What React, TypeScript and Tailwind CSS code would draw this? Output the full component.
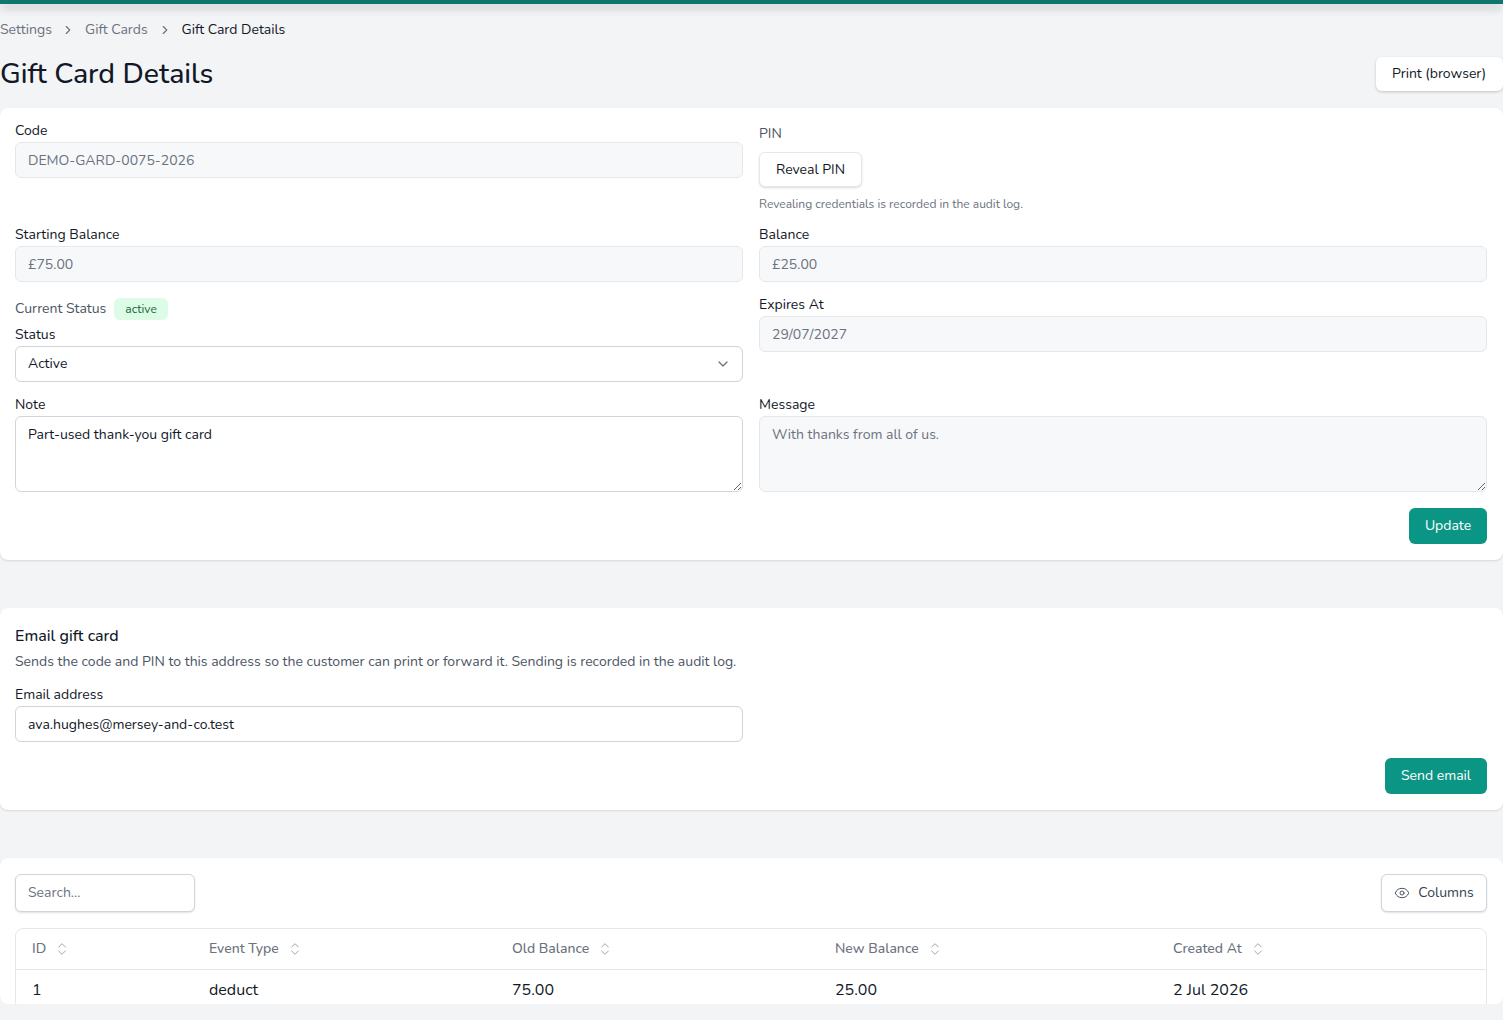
import { ChevronDown, ChevronRight, ChevronsUpDown, Eye } from "lucide-react";

const fieldBase = "block w-full rounded-md border px-3 text-sm outline-none";
const readOnlyField = `${fieldBase} h-9 border-[#e5e7eb] bg-[#f7f8fa] text-[#6b7280]`;

function Label({ children }: { children: string }) {
  return <div className="mb-px h-[21px] pt-px text-sm leading-5 text-[#111827]">{children}</div>;
}

function ReadOnly({ label, value }: { label: string; value: string }) {
  return (
    <div>
      <Label>{label}</Label>
      <input readOnly value={value} className={readOnlyField} />
    </div>
  );
}

const headers = ["ID", "Event Type", "Old Balance", "New Balance", "Created At"];
const row = ["1", "deduct", "75.00", "25.00", "2 Jul 2026"];

export default function App() {
  return (
    <div className="flex h-screen flex-col overflow-hidden bg-[#f3f4f6] font-['Nunito','Lato','Noto_Sans',sans-serif] text-[#111827]">
      <div className="relative z-10 h-1 shrink-0 bg-[#0f766e] shadow-[0_4px_10px_rgba(0,0,0,0.24)]" />

      <main className="h-[1000px] shrink-0 overflow-hidden rounded-b-lg">
        {/* Breadcrumb */}
        <nav className="mt-4 flex h-5 items-center text-sm leading-5">
          <span className="w-[61px] text-[#6b7280]">Settings</span>
          <ChevronRight className="h-3.5 w-3.5 text-[#6b7280]" />
          <span className="ml-[10px] w-[73px] text-[#6b7280]">Gift Cards</span>
          <ChevronRight className="h-3.5 w-3.5 text-[#6b7280]" />
          <span className="ml-[9.5px]">Gift Card Details</span>
        </nav>

        {/* Title */}
        <div className="mt-[15px] mb-[17px] flex h-9 items-center justify-between">
          <h1 className="pt-0.5 text-[28.5px] leading-9 font-medium">Gift Card Details</h1>
          <button className="mt-0.5 h-[34px] w-[127px] rounded-md bg-white pr-px text-sm shadow-[0_1px_3px_rgba(0,0,0,0.2)]">
            Print (browser)
          </button>
        </div>

        {/* Details card */}
        <section className="rounded-lg bg-white pt-3 pr-4 pb-4 pl-[15px] shadow-[0_1px_2px_rgba(0,0,0,0.12)]">
          <div className="grid grid-cols-2 gap-x-4 gap-y-3">
            <ReadOnly label="Code" value="DEMO-GARD-0075-2026" />
            <div className="pt-1">
              <div className="h-5 text-sm leading-5 text-[#4b5563]">PIN</div>
              <button className="mt-2 h-[35px] w-[103px] rounded-md border border-[#e5e7eb] bg-white text-sm shadow-[0_1px_2px_rgba(0,0,0,0.15)]">
                Reveal PIN
              </button>
              <p className="mt-[9px] text-xs leading-4 text-[#6b7280]">Revealing credentials is recorded in the audit log.</p>
            </div>

            <ReadOnly label="Starting Balance" value="£75.00" />
            <ReadOnly label="Balance" value="£25.00" />

            <div>
              <div className="mt-1 flex h-[22px] items-center text-sm text-[#4b5563]">
                <span>Current Status</span>
                <span className="ml-2 flex h-[22px] items-center rounded-md bg-[#dcfce7] px-[11px] text-xs text-[#166534]">active</span>
              </div>
              <div className="mt-1">
                <Label>Status</Label>
                <div className="flex h-9 items-center justify-between rounded-md border border-[#d1d5db] bg-white pr-[11px] pl-3 text-sm">
                  <span>Active</span>
                  <ChevronDown className="h-4 w-4 text-[#6b7280]" />
                </div>
              </div>
            </div>
            <ReadOnly label="Expires At" value="29/07/2027" />

            <div>
              <Label>Note</Label>
              <textarea
                readOnly
                value="Part-used thank-you gift card"
                className={`${fieldBase} h-[76px] border-[#d1d5db] bg-white py-2 leading-5`}
              />
            </div>
            <div>
              <Label>Message</Label>
              <textarea
                readOnly
                value="With thanks from all of us."
                className={`${fieldBase} h-[76px] border-[#e5e7eb] bg-[#f7f8fa] py-2 leading-5 text-[#6b7280]`}
              />
            </div>
          </div>
          <div className="mt-4 flex justify-end">
            <button className="h-9 w-[78px] rounded-md bg-[#0b9585] text-sm text-white">Update</button>
          </div>
        </section>

        {/* Email card */}
        <section className="mt-12 rounded-lg bg-white pt-4 pr-4 pb-4 pl-[15px] shadow-[0_1px_2px_rgba(0,0,0,0.12)]">
          <h2 className="text-base leading-6 font-medium">Email gift card</h2>
          <p className="mt-1 text-sm leading-5 text-[#4b5563]">
            Sends the code and PIN to this address so the customer can print or forward it. Sending is recorded in the audit log.
          </p>
          <div className="mt-3 grid grid-cols-2 gap-x-4">
            <div>
              <Label>Email address</Label>
              <input
                readOnly
                value="ava.hughes@mersey-and-co.test"
                className={`${fieldBase} h-9 border-[#d1d5db] bg-white`}
              />
            </div>
          </div>
          <div className="mt-4 flex justify-end">
            <button className="h-9 w-[102px] rounded-md bg-[#0b9585] text-sm text-white">Send email</button>
          </div>
        </section>

        {/* History table */}
        <section className="mt-12 rounded-lg bg-white pt-4 pr-4 pb-4 pl-[15px] shadow-[0_1px_2px_rgba(0,0,0,0.12)]">
          <div className="flex items-center justify-between">
            <input
              placeholder="Search..."
              className="h-[38px] w-[180px] rounded-md border border-[#d1d5db] bg-white px-3 pb-0.5 text-sm shadow-[0_1px_2px_rgba(0,0,0,0.12)] outline-none placeholder:text-[#6b7280]"
            />
            <button className="flex h-[38px] w-[106px] items-center justify-center gap-2 rounded-md border border-[#d1d5db] bg-white text-sm text-[#374151] shadow-[0_1px_2px_rgba(0,0,0,0.12)]">
              <Eye className="h-4 w-4 text-[#4b5563]" strokeWidth={1.5} />
              Columns
            </button>
          </div>
          <div className="mt-4 overflow-hidden rounded-lg border border-[#e5e7eb]">
            <table className="w-full table-fixed text-left">
              <colgroup>
                <col className="w-[177px]" />
                <col className="w-[303px]" />
                <col className="w-[323px]" />
                <col className="w-[338px]" />
                <col />
              </colgroup>
              <thead>
                <tr className="border-b border-[#e5e7eb]">
                  {headers.map((h) => (
                    <th key={h} className="h-10 px-4 text-sm font-medium text-[#6b7280]">
                      <span className="flex items-center gap-2">
                        {h}
                        <ChevronsUpDown className="h-4 w-4 text-[#9ca3af]" strokeWidth={1.5} />
                      </span>
                    </th>
                  ))}
                </tr>
              </thead>
              <tbody>
                <tr>
                  {row.map((c) => (
                    <td key={c} className="h-10 px-4 pt-0.5 text-base">{c}</td>
                  ))}
                </tr>
              </tbody>
            </table>
          </div>
        </section>
      </main>
    </div>
  );
}
